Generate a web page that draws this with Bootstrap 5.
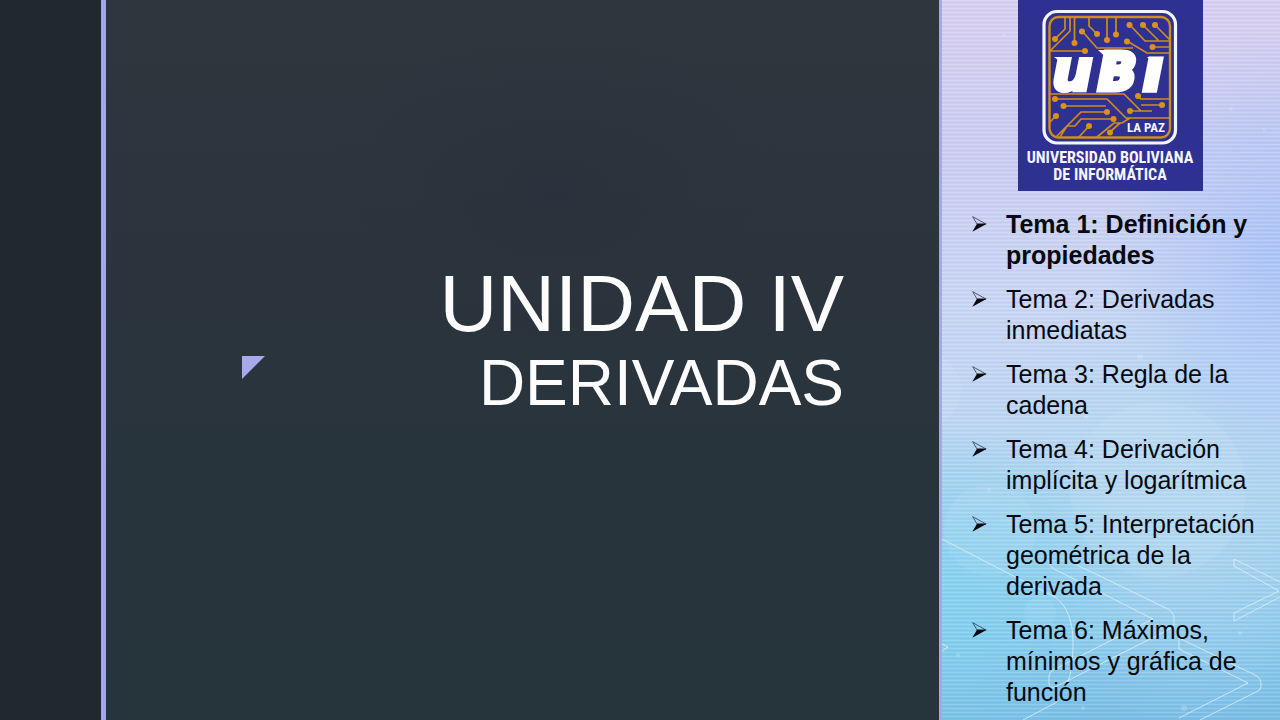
<!DOCTYPE html>
<html lang="es">
<head>
<meta charset="utf-8">
<meta name="viewport" content="width=device-width, initial-scale=1">
<title>Unidad IV: Derivadas</title>
<link href="https://cdn.jsdelivr.net/npm/bootstrap@5.3.0/dist/css/bootstrap.min.css" rel="stylesheet">
<style>
  body { font-family: "Liberation Sans", Arial, sans-serif; background: #212830; }
  .rail { width: 106px; background: #212830; border-right: 5px solid #a5a7ee; }
  .stage {
    padding: 0 95px 38px 136px;
    background:
      radial-gradient(ellipse 240px 160px at 54% 27%, rgba(43,47,60,.5), transparent),
      linear-gradient(#2e363e, #2b343d 40%, #28343c 65%, #26343b);
  }
  .unit-mark { width: 23px; height: 23px; margin-bottom: 41px; }
  .unit-title { font-size: 80px; line-height: 84px; color: #fcfcfd; }
  .unit-title .topic { font-size: 64px; line-height: 74px; }
  .side {
    width: 341px;
    border-left: 3px solid #a5a7ee;
    background:
      repeating-linear-gradient(rgba(255,255,255,.16) 0 1px, transparent 1px 2px, rgba(90,90,180,.05) 2px 3px, transparent 3px 4px),
      radial-gradient(ellipse 170px 230px at 100% 36%, rgba(163,192,247,.8), transparent),
      radial-gradient(ellipse 210px 170px at 0% 83%, rgba(126,212,240,.75), transparent),
      radial-gradient(ellipse 190px 240px at 72% 68%, rgba(178,216,240,.75), transparent),
      linear-gradient(#d8cff0, #cbcdf1 20%, #c9d5f3 42%, #bcd6f2 58%, #a0d0ee 75%, #84c6ea 90%, #78bde6);
  }
  .side-art { z-index: 0; }
  .side-body { z-index: 1; }
  .crest { width: 185px; height: 191px; margin-left: 76px; }
  .topics { margin: 18px 16px 0 30px; font-size: 25px; line-height: 31px; color: #080a10; }
  .topics li { gap: 19px; margin-bottom: 13px; }
  .topics svg { width: 15px; height: 16px; margin-top: 7px; }
</style>
</head>
<body>
<div class="d-flex min-vh-100 overflow-hidden">
  <div class="rail flex-shrink-0"></div>

  <main class="stage flex-grow-1 d-flex align-items-center">
    <div class="d-flex justify-content-between align-items-end w-100">
      <svg class="unit-mark" viewBox="0 0 23 23" aria-hidden="true"><path d="M0 0H23L0 23Z" fill="#a8a9ec"/></svg>
      <h1 class="unit-title fw-normal text-end mb-0">UNIDAD IV<span class="topic d-block">DERIVADAS</span></h1>
    </div>
  </main>

  <aside class="side flex-shrink-0 position-relative">
    <svg class="side-art position-absolute top-0 start-0 w-100 h-100" viewBox="0 0 338 720" preserveAspectRatio="xMidYMax slice" aria-hidden="true">
      <g fill="#fff" fill-opacity=".07">
        <circle cx="216" cy="490" r="88"/><circle cx="48" cy="530" r="46"/>
        <circle cx="98" cy="613" r="16"/><circle cx="-20" cy="390" r="39"/>
      </g>
      <g fill="#fff" fill-opacity=".18">
        <circle cx="62" cy="35" r="2"/><circle cx="289" cy="109" r="2"/><circle cx="322" cy="130" r="1.500"/>
        <circle cx="198" cy="357" r="3"/><circle cx="144" cy="417" r="2"/><circle cx="47" cy="490" r="2"/>
        <circle cx="298" cy="633" r="2"/><circle cx="16" cy="655" r="2"/><circle cx="242" cy="708" r="3"/><circle cx="141" cy="708" r="2"/>
      </g>
      <g fill="none" stroke="#e4f2fa" stroke-opacity=".75">
        <path d="M0 539L83 582L113 597C127 607 131 625 131 643C131 660 129 676 125 683M115 702L81 720M0 644L6 647L0 651"/>
        <path d="M135 565L226 609Q232 612 232 619V624Q232 627 226 630L115 686Q107 690 107 683V676Q107 672 113 669L211 619L112 569Q107 566 107 560"/>
        <path d="M338 582L292 559V566L337 591L292 613V621L338 597"/>
        <path d="M237 638L315 676Q319 679 319 683V687Q319 690 314 692L258 720M237 638V649L306 683L237 718"/>
      </g>
    </svg>

    <div class="side-body position-relative">
      <svg class="crest d-block" viewBox="0 0 185 191" role="img" aria-label="Universidad Boliviana de Informática, La Paz">
        <rect width="185" height="191" fill="#2e3192"/>
        <rect x="26" y="11.500" width="131.500" height="131.500" rx="13" fill="none" stroke="#f4f4fc" stroke-width="3.200"/>
        <rect x="31.500" y="17" width="120.500" height="120.500" rx="9" fill="none" stroke="#d08c1c" stroke-width="2.400"/>
        <g fill="none" stroke="#d08c1c" stroke-width="1.700">
          <path d="M47 18V29L37 39M52 18V31L32 51M56.500 18V43M71 18V26L79 34M89 18V40M98 18V34M64 31L79 48H115M109 41L129 53H152M32 51H67M112 25L127 41H152M125 25L141 41M137 25L152 40M135 47H152"/>
          <path d="M32 94H106L123 111M37 99H89L108 118H152M45 106H88M120 96L123 99H152M112 111H134M123 105H144M112 118L104 123H96L79 137M38 116L32 122M89 112H63L38 137M95 119H63L57 126H49L42 137M71 126L61 137M92 132L102 123"/>
        </g>
        <g fill="#d9921a">
          <circle cx="37" cy="39" r="3"/><circle cx="56.500" cy="43" r="3"/><circle cx="64" cy="31.500" r="3"/><circle cx="79" cy="34" r="3"/><circle cx="89" cy="40" r="3"/><circle cx="98" cy="34.500" r="3"/><circle cx="111.500" cy="25" r="3"/><circle cx="125" cy="25" r="3"/><circle cx="137" cy="25" r="3"/><circle cx="109" cy="41.500" r="3"/><circle cx="134.500" cy="47" r="3"/><circle cx="67" cy="51" r="3"/>
          <circle cx="37" cy="99" r="3"/><circle cx="45.500" cy="106" r="3"/><circle cx="38" cy="116" r="3"/><circle cx="89" cy="112" r="3"/><circle cx="95.500" cy="119" r="3"/><circle cx="71" cy="126" r="3"/><circle cx="92" cy="132.500" r="3"/><circle cx="112" cy="111" r="3"/><circle cx="144" cy="105" r="3"/><circle cx="120" cy="96" r="3"/>
        </g>
        <g fill="#fff" stroke="#fff" font-family="'DejaVu Sans', sans-serif" font-weight="700" font-style="italic">
          <text x="34" y="90" font-size="57" stroke-width="4">u</text>
          <text x="80" y="90" font-size="51" stroke-width="5">B</text>
          <text x="125" y="90" font-size="57" stroke-width="5">ı</text>
        </g>
        <path d="M36 57H50L48 66ZM80 50H98L94 63ZM129 57H144L140 67Z" fill="#fff"/>
        <g fill="#f6f6fd" font-family="'Roboto Condensed', Roboto, sans-serif" font-weight="700">
          <text x="128" y="132" font-size="13" text-anchor="middle">LA PAZ</text>
          <text x="92" y="163" font-size="16" text-anchor="middle">UNIVERSIDAD BOLIVIANA</text>
          <text x="92" y="180" font-size="16" text-anchor="middle">DE INFORMÁTICA</text>
        </g>
      </svg>

      <svg class="d-none" aria-hidden="true">
        <symbol id="arrow" viewBox="0 0 15 16">
          <path d="M.7 .7L14 8L5 8Z" fill="none" stroke="#333a4c" stroke-width=".8"/>
          <path d="M5 7.800H14.800L.3 15.800Z" fill="#080a10"/>
        </symbol>
      </svg>
      <ul class="topics list-unstyled">
        <li class="d-flex fw-bold"><svg class="flex-shrink-0" aria-hidden="true"><use href="#arrow"/></svg><span>Tema 1: Definición y propiedades</span></li>
        <li class="d-flex"><svg class="flex-shrink-0" aria-hidden="true"><use href="#arrow"/></svg><span>Tema 2: Derivadas inmediatas</span></li>
        <li class="d-flex"><svg class="flex-shrink-0" aria-hidden="true"><use href="#arrow"/></svg><span>Tema 3: Regla de la cadena</span></li>
        <li class="d-flex"><svg class="flex-shrink-0" aria-hidden="true"><use href="#arrow"/></svg><span>Tema 4: Derivación implícita y logarítmica</span></li>
        <li class="d-flex"><svg class="flex-shrink-0" aria-hidden="true"><use href="#arrow"/></svg><span>Tema 5: Interpretación geométrica de la derivada</span></li>
        <li class="d-flex mb-0"><svg class="flex-shrink-0" aria-hidden="true"><use href="#arrow"/></svg><span>Tema 6: Máximos, mínimos y gráfica de función</span></li>
      </ul>
    </div>
  </aside>
</div>
<script src="https://cdn.jsdelivr.net/npm/bootstrap@5.3.0/dist/js/bootstrap.bundle.min.js"></script>
</body>
</html>
